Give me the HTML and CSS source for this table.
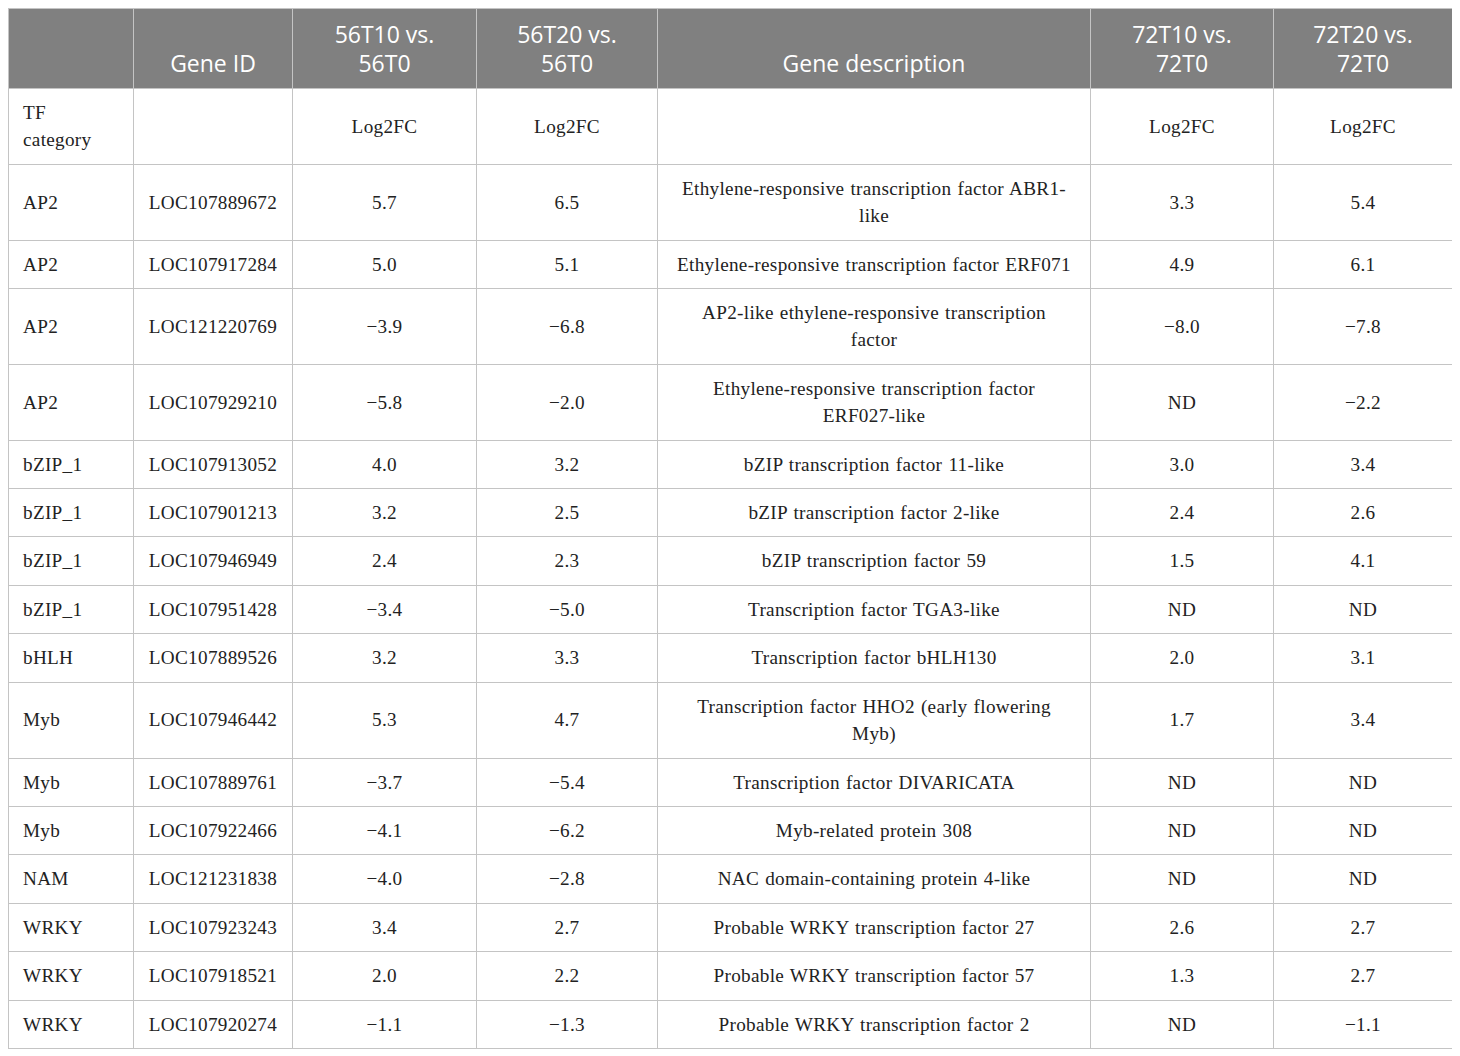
FILE: index.html
```html
<!DOCTYPE html>
<html>
<head>
<meta charset="utf-8">
<link rel="stylesheet" href="styles.css">
</head>
<body>
<table class="tbl">
<colgroup>
<col class="c1"><col class="c2"><col class="c3"><col class="c4"><col class="c5"><col class="c6"><col class="c7">
</colgroup>
<thead>
<tr><th></th><th>Gene ID</th><th>56T10 vs.<br>56T0</th><th>56T20 vs.<br>56T0</th><th>Gene description</th><th>72T10 vs.<br>72T0</th><th>72T20 vs.<br>72T0</th></tr>
</thead>
<tbody>
<tr><td class="l">TF<br>category</td><td></td><td>Log2FC</td><td>Log2FC</td><td></td><td>Log2FC</td><td>Log2FC</td></tr>
<tr><td class="l">AP2</td><td>LOC107889672</td><td>5.7</td><td>6.5</td><td>Ethylene-responsive transcription factor ABR1-<br>like</td><td>3.3</td><td>5.4</td></tr>
<tr><td class="l">AP2</td><td>LOC107917284</td><td>5.0</td><td>5.1</td><td>Ethylene-responsive transcription factor ERF071</td><td>4.9</td><td>6.1</td></tr>
<tr><td class="l">AP2</td><td>LOC121220769</td><td>−3.9</td><td>−6.8</td><td>AP2-like ethylene-responsive transcription<br>factor</td><td>−8.0</td><td>−7.8</td></tr>
<tr><td class="l">AP2</td><td>LOC107929210</td><td>−5.8</td><td>−2.0</td><td>Ethylene-responsive transcription factor<br>ERF027-like</td><td>ND</td><td>−2.2</td></tr>
<tr><td class="l">bZIP_1</td><td>LOC107913052</td><td>4.0</td><td>3.2</td><td>bZIP transcription factor 11-like</td><td>3.0</td><td>3.4</td></tr>
<tr><td class="l">bZIP_1</td><td>LOC107901213</td><td>3.2</td><td>2.5</td><td>bZIP transcription factor 2-like</td><td>2.4</td><td>2.6</td></tr>
<tr><td class="l">bZIP_1</td><td>LOC107946949</td><td>2.4</td><td>2.3</td><td>bZIP transcription factor 59</td><td>1.5</td><td>4.1</td></tr>
<tr><td class="l">bZIP_1</td><td>LOC107951428</td><td>−3.4</td><td>−5.0</td><td>Transcription factor TGA3-like</td><td>ND</td><td>ND</td></tr>
<tr><td class="l">bHLH</td><td>LOC107889526</td><td>3.2</td><td>3.3</td><td>Transcription factor bHLH130</td><td>2.0</td><td>3.1</td></tr>
<tr><td class="l">Myb</td><td>LOC107946442</td><td>5.3</td><td>4.7</td><td>Transcription factor HHO2 (early flowering<br>Myb)</td><td>1.7</td><td>3.4</td></tr>
<tr><td class="l">Myb</td><td>LOC107889761</td><td>−3.7</td><td>−5.4</td><td>Transcription factor DIVARICATA</td><td>ND</td><td>ND</td></tr>
<tr><td class="l">Myb</td><td>LOC107922466</td><td>−4.1</td><td>−6.2</td><td>Myb-related protein 308</td><td>ND</td><td>ND</td></tr>
<tr><td class="l">NAM</td><td>LOC121231838</td><td>−4.0</td><td>−2.8</td><td>NAC domain-containing protein 4-like</td><td>ND</td><td>ND</td></tr>
<tr><td class="l">WRKY</td><td>LOC107923243</td><td>3.4</td><td>2.7</td><td>Probable WRKY transcription factor 27</td><td>2.6</td><td>2.7</td></tr>
<tr><td class="l">WRKY</td><td>LOC107918521</td><td>2.0</td><td>2.2</td><td>Probable WRKY transcription factor 57</td><td>1.3</td><td>2.7</td></tr>
<tr><td class="l">WRKY</td><td>LOC107920274</td><td>−1.1</td><td>−1.3</td><td>Probable WRKY transcription factor 2</td><td>ND</td><td>−1.1</td></tr>
</tbody>
</table>
</body>
</html>
```
FILE: styles.css
```css
html, body {
  background: #ffffff;
}
body {
  margin: 8px;
}
.tbl {
  border-collapse: collapse;
  table-layout: fixed;
  width: 1444px;
  color: #222222;
}
.c1 { width: 125px; }
.c2 { width: 159px; }
.c3 { width: 184px; }
.c4 { width: 181px; }
.c5 { width: 433px; }
.c6 { width: 183px; }
.c7 { width: 179px; }
.tbl th {
  background: #808080;
  color: #ffffff;
  font-family: "Open Sans", "Noto Sans", sans-serif;
  font-weight: 400;
  font-size: 23px;
  line-height: 29px;
  height: 58px;
  padding: 11px 10px 10px;
  vertical-align: bottom;
  text-align: center;
  border: 1px solid #c4c4c4;
}
.tbl td {
  font-family: "Liberation Serif", "Times New Roman", serif;
  font-size: 19.2px;
  letter-spacing: 0.3px;
  word-spacing: 1px;
  line-height: 27.4px;
  padding: 10px 10px 10px;
  border: 1px solid #c4c4c4;
  text-align: center;
  vertical-align: middle;
}
.tbl td.l {
  text-align: left;
  padding-left: 14px;
}
```
